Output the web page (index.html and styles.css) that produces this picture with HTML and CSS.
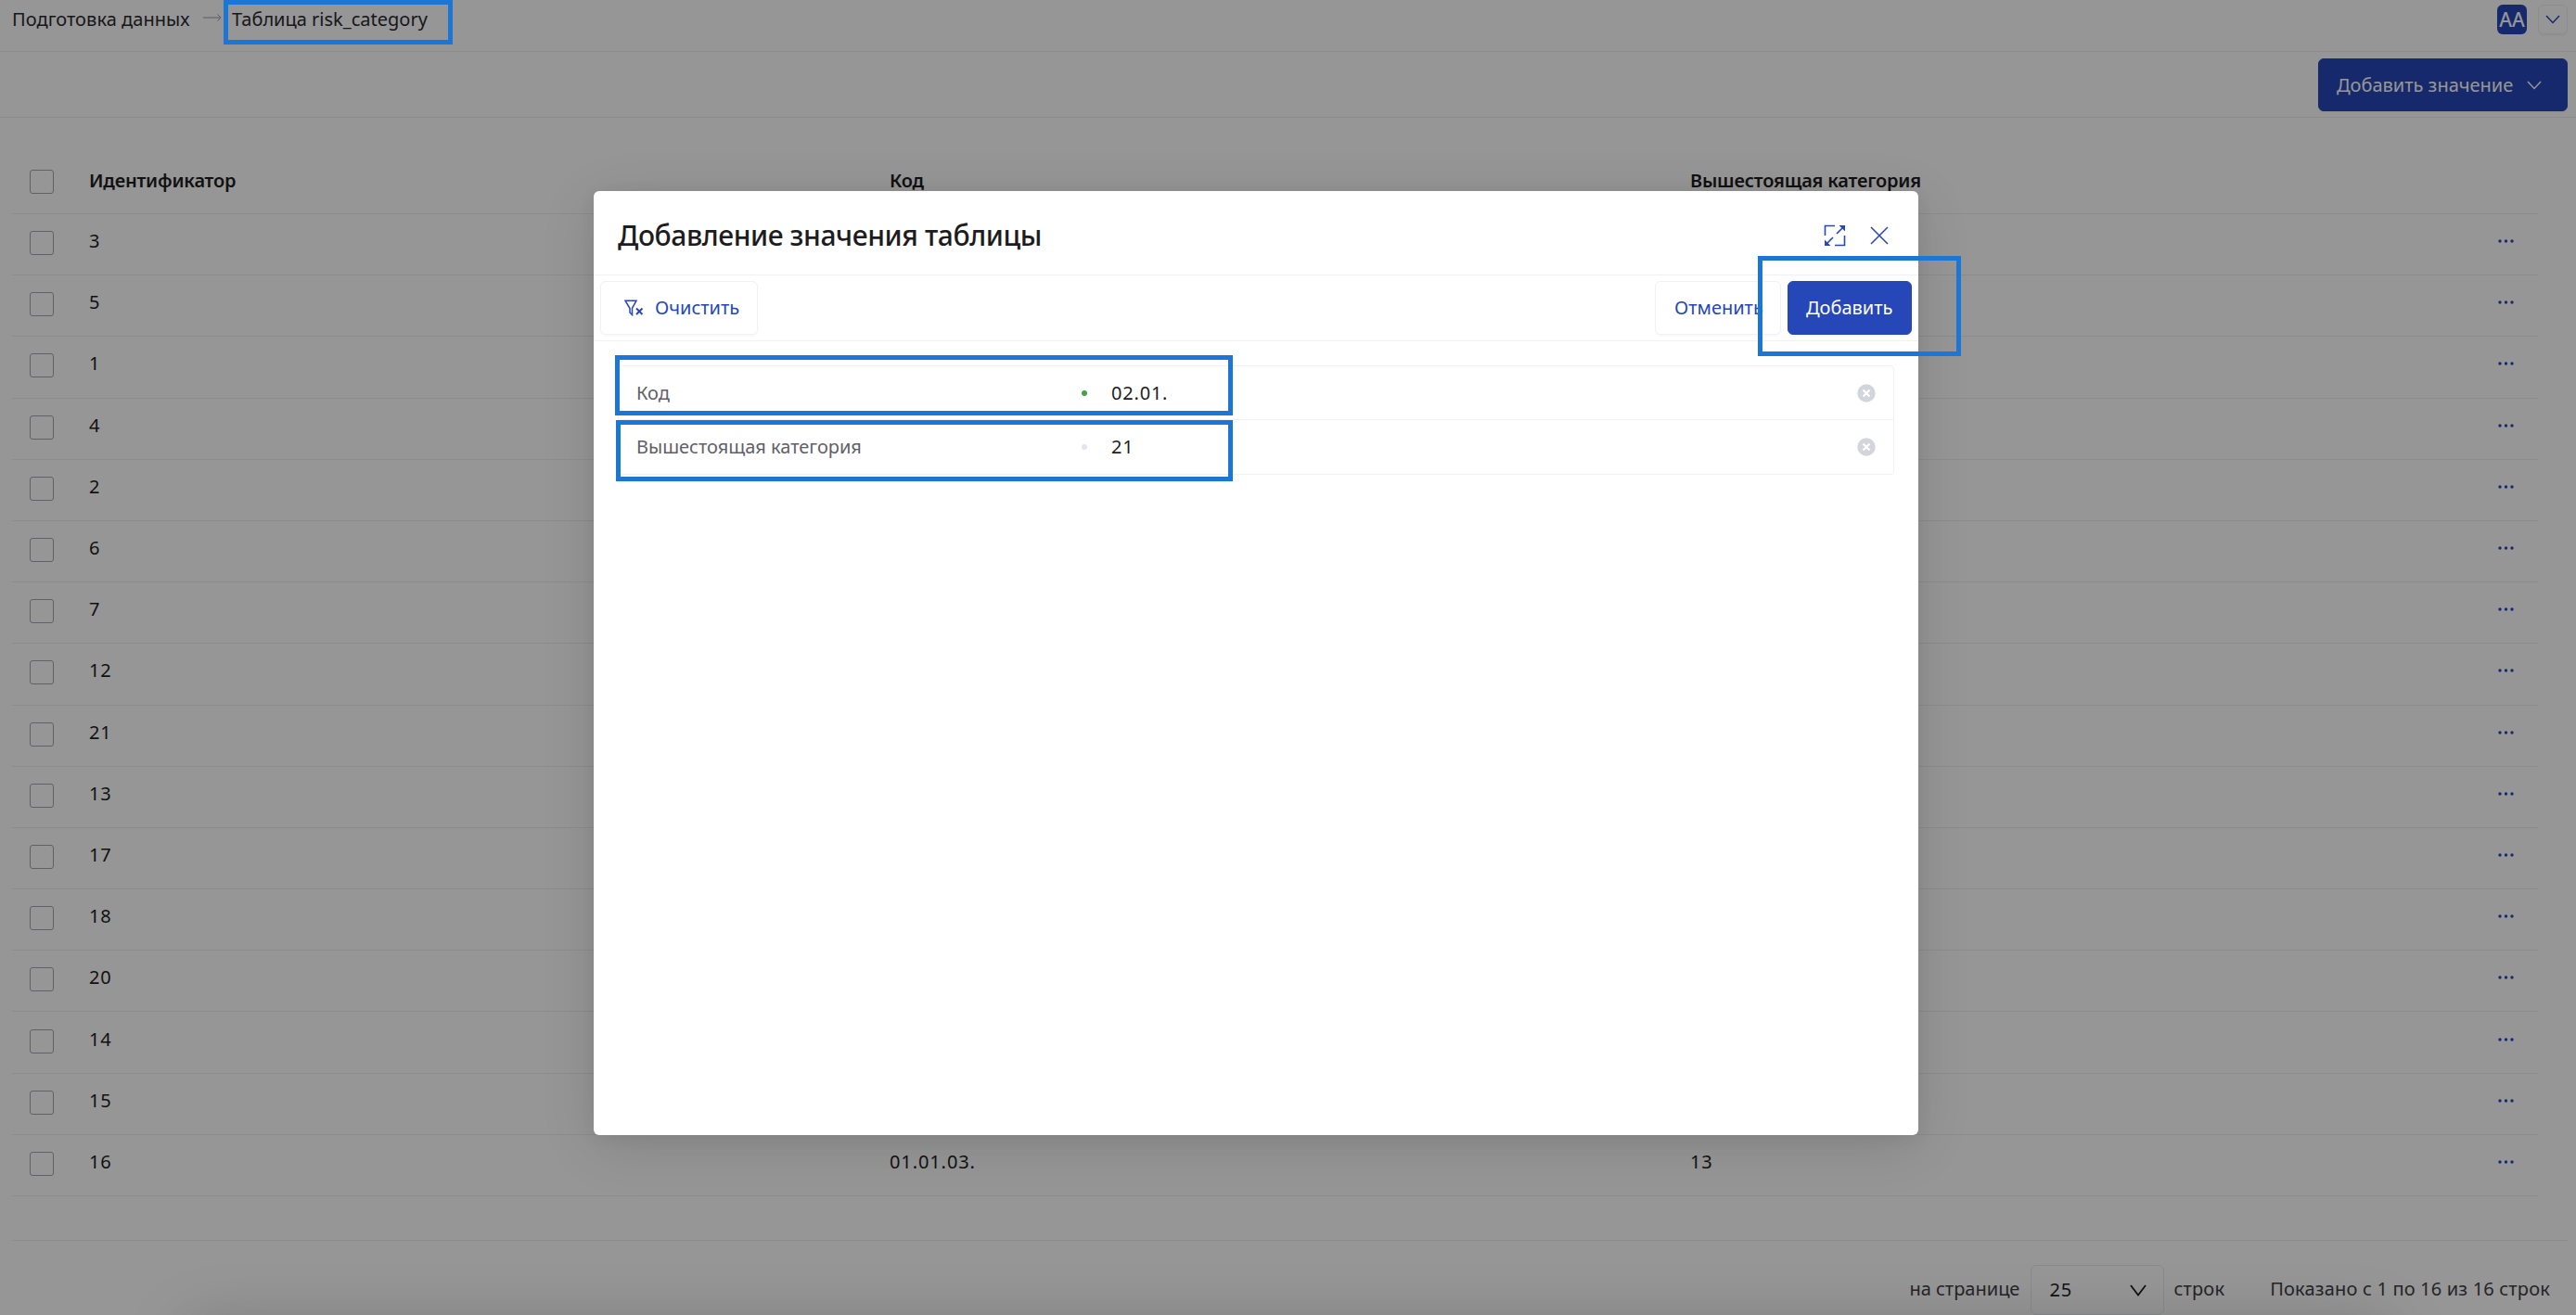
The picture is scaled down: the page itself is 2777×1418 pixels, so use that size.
FILE: index.html
```
<!DOCTYPE html>
<html lang="ru">
<head>
    <meta charset="UTF-8">
    <title>Таблица risk_category</title>
    <link rel="stylesheet" href="styles.css">
</head>
<body>
<div class="page">
    <header class="topbar">
        <nav class="crumbs">
            <span class="crumb-parent">Подготовка данных</span>
            <svg class="crumb-arrow" width="20" height="10" viewBox="0 0 20 10"><path d="M0 5h19M15.500 1.500L19 5l-3.500 3.500"/></svg>
            <span>Таблица risk_category</span>
        </nav>
        <div class="user">
            <span class="avatar">AA</span>
            <button class="user-menu"><svg class="chevron" width="16" height="10" viewBox="0 0 16 10"><path d="M1 1l7 7.500L15 1"/></svg></button>
        </div>
    </header>
    <div class="toolbar">
        <button class="btn btn-primary btn-add-value">
            <span>Добавить значение</span>
            <svg class="chevron" width="16" height="10" viewBox="0 0 16 10"><path d="M1 1l7 7.500L15 1"/></svg>
        </button>
    </div>
    <main class="content">
        <div id="grid">
            <div class="row row-head">
                <span class="check"></span>
                <span>Идентификатор</span>
                <span>Код</span>
                <span>Вышестоящая категория</span>
            </div>
        </div>
    </main>
    <footer class="pager">
        <span>на странице</span>
        <div class="select">
            <span>25</span>
            <svg class="chevron chevron-dark" width="18" height="13" viewBox="0 0 18 13"><path d="M1 1l8 10.500L17 1"/></svg>
        </div>
        <span class="pager-rows">строк</span>
        <span class="pager-total">Показано с 1 по 16 из 16 строк</span>
    </footer>
    <div class="bottom-shadow"></div>
</div>

<div class="overlay"></div>

<div class="modal">
    <div class="modal-head">
        <h1 class="modal-title">Добавление значения таблицы</h1>
        <svg class="icon-expand" width="24" height="24" viewBox="0 0 24 24">
            <path class="line" d="M12 1.500H1.500V12M12 22.500h10.500V12M14 10l6-6M10 14l-6 6"/>
            <path class="fill" d="M16.500 1H23v6.500zM1 16.500V23h6.500z"/>
        </svg>
        <svg class="icon-close" width="20" height="20" viewBox="0 0 20 20"><path d="M1 1l18 18M19 1L1 19"/></svg>
    </div>
    <div class="modal-tools">
        <button class="btn btn-clear">
            <svg class="icon-filter" width="21" height="18" viewBox="0 0 21 18">
                <path d="M1 1.200h12L8.500 9.500v7L6 14V9.500z"/>
                <path class="cross" d="M13 9.500l6.500 6.500M19.500 9.500L13 16"/>
            </svg>
            <span>Очистить</span>
        </button>
        <button class="btn btn-cancel">Отменить</button>
        <button class="btn btn-primary btn-add">Добавить</button>
    </div>
    <div class="form">
        <div class="field">
            <span class="label">Код</span>
            <i class="dot dot-required"></i>
            <span class="value">02.01.</span>
            <svg class="icon-clear" width="20" height="20" viewBox="0 0 20 20"><circle cx="10" cy="10" r="9.700"/><path d="M6.500 6.500l7 7M13.500 6.500l-7 7"/></svg>
        </div>
        <div class="field">
            <span class="label">Вышестоящая категория</span>
            <i class="dot"></i>
            <span class="value">21</span>
            <svg class="icon-clear" width="20" height="20" viewBox="0 0 20 20"><circle cx="10" cy="10" r="9.700"/><path d="M6.500 6.500l7 7M13.500 6.500l-7 7"/></svg>
        </div>
    </div>
</div>

<div class="mark mark-crumb"></div>
<div class="mark mark-code"></div>
<div class="mark mark-parent"></div>
<div class="mark mark-add"></div>

<script>
    // строки таблицы: id, код, вышестоящая категория
    var rows = [[3], [5], [1], [4], [2], [6], [7], [12], [21], [13], [17], [18], [20], [14], [15], [16, '01.01.03.', 13]];
    var dots = '<svg class="dots" width="17" height="4" viewBox="0 0 17 4"><circle cx="2" cy="2" r="1.700"/><circle cx="8.500" cy="2" r="1.700"/><circle cx="15" cy="2" r="1.700"/></svg>';
    document.getElementById('grid').insertAdjacentHTML('beforeend', rows.map(function (r) {
        return '<div class="row"><span class="check"></span><span>' + r[0] + '</span><span>' +
            (r[1] || '') + '</span><span>' + (r[2] || '') + '</span>' + dots + '</div>';
    }).join(''));
</script>
</body>
</html>
```
FILE: styles.css
```
* {
    box-sizing: border-box;
}

body {
    margin: 0;
    width: 2777px;
    height: 1418px;
    position: relative;
    overflow: hidden;
    background: #fff;
    color: #1d1d21;
    font: 20px/28px "Noto Sans", sans-serif;
    white-space: nowrap;
}

button {
    font: inherit;
    color: inherit;
    background: none;
    padding: 0;
    border: 0;
}

svg {
    display: block;
    flex: none;
    fill: none;
    stroke: #2547b8;
}

.page {
    position: relative;
    height: 1418px;
    display: flex;
    flex-direction: column;
    overflow: hidden;
}

.topbar {
    height: 56px;
    flex: none;
    border-bottom: 1px solid #eeeff3;
    display: flex;
    justify-content: space-between;
    align-items: flex-start;
    padding: 5px 9px 0 13px;
}

.crumbs {
    display: flex;
    align-items: center;
    height: 32px;
    color: #2a2a30;
}

.crumb-parent {
    width: 206px;
    letter-spacing: .05px;
}

.crumb-arrow {
    stroke: #9a9ca6;
    margin: 0 11px 4px 0;
}

.user {
    display: flex;
    gap: 12px;
}

.avatar {
    width: 32px;
    height: 32px;
    line-height: 32px;
    border-radius: 6px;
    background: #2547b8;
    color: #fff;
    text-align: center;
    font-size: 21px;
    font-weight: 500;
}

.user-menu {
    width: 32px;
    height: 32px;
    border: 1px solid #eeeff3;
    border-radius: 6px;
    display: flex;
    align-items: center;
    justify-content: center;
    box-shadow: 0 2px 1px rgba(0, 0, 0, .03);
}

.chevron {
    stroke-width: 1.500;
}

.chevron-dark {
    stroke: #1d1d21;
    stroke-width: 1.800;
}

.toolbar {
    height: 71px;
    flex: none;
    border-bottom: 1px solid #eeeff3;
    display: flex;
    justify-content: flex-end;
    padding: 7px 9px 0 0;
}

.btn {
    height: 58px;
    border: 1px solid #f0f1f5;
    border-radius: 6px;
    display: flex;
    align-items: center;
    box-shadow: 0 2px 2px rgba(0, 0, 0, .025);
    color: #2547b8;
}

.btn-primary {
    background: #2547b8;
    border-color: #2547b8;
    color: #fff;
}

.btn-add-value {
    width: 269px;
    height: 57px;
    justify-content: space-between;
    padding: 0 27px 0 19px;
}

.btn-add-value .chevron {
    stroke: #fff;
}

.content {
    padding: 39px 41px 0 13px;
    height: 1210px;
    flex: none;
}

.row {
    height: 66.1875px;
    border-bottom: 1px solid #eeeff3;
    display: grid;
    grid-template-columns: 83px 863px 863px 1fr 43px;
    padding-bottom: 7px;
    align-items: center;
    letter-spacing: .9px;
}

.row-head {
    height: 65px;
    font-weight: 600;
    letter-spacing: -.2px;
    padding-bottom: 6px;
}

.check {
    width: 26px;
    height: 26px;
    margin: 4px 0 0 19px;
    border: 1px solid #a3a5ae;
    border-radius: 3px;
}

.row-head .check {
    margin-top: 2px;
}

.dots {
    fill: #2547b8;
    stroke: none;
}

.pager {
    height: 81px;
    flex: none;
    margin: 0 9px 0 13px;
    border-top: 1px solid #eeeff3;
    display: flex;
    justify-content: flex-end;
    padding: 26px 19px 0 0;
    line-height: 52px;
    color: #3e3f45;
}

.select {
    width: 144px;
    height: 54px;
    border: 1px solid #e9eaef;
    border-radius: 6px;
    margin: 0 10px 0 12px;
    padding: 0 18px 0 19px;
    display: flex;
    align-items: center;
    justify-content: space-between;
    color: #1d1d21;
    letter-spacing: 1px;
}

.pager-rows {
    letter-spacing: .2px;
}

.pager-total {
    margin-left: 49px;
    letter-spacing: .18px;
}

.bottom-shadow {
    position: absolute;
    left: 200px;
    right: 200px;
    top: 1430px;
    height: 60px;
    border-radius: 12px;
    box-shadow: 0 0 70px rgba(0, 0, 0, .2);
}

.overlay {
    position: absolute;
    inset: 0;
    background: rgba(0, 0, 0, .41);
}

.modal {
    position: absolute;
    left: 640px;
    top: 206px;
    width: 1428px;
    height: 1018px;
    background: #fff;
    border-radius: 6px;
    box-shadow: 0 12px 60px rgba(0, 0, 0, .12), 0 3px 18px rgba(0, 0, 0, .06);
}

.modal-head {
    height: 91px;
    border-bottom: 1px solid #f0f1f5;
    display: flex;
    align-items: center;
    padding: 5px 32px 0 26px;
}

.modal-title {
    margin: 0 auto 0 0;
    font-size: 30px;
    line-height: 40px;
    font-weight: 500;
    letter-spacing: -.4px;
}

.icon-expand .line {
    stroke-width: 1.600;
}

.icon-expand .fill {
    fill: #2547b8;
    stroke: none;
}

.icon-close {
    margin-left: 26px;
    stroke-width: 1.500;
}

.modal-tools {
    height: 71px;
    border-bottom: 1px solid #f0f1f5;
    display: flex;
    padding: 6px 7px 0;
}

.btn-clear {
    width: 170px;
    padding-left: 25px;
    margin-right: auto;
}

.icon-filter {
    margin-right: 12px;
    stroke-width: 1.500;
}

.icon-filter .cross {
    stroke-width: 1.900;
}

.btn-cancel {
    width: 136px;
    padding-left: 20px;
    margin-right: 7px;
}

.btn-add {
    width: 134px;
    padding-left: 19px;
}

.form {
    margin: 26px 26px 0;
    border: 1px solid #f0f1f5;
    border-radius: 4px;
}

.field {
    height: 57px;
    display: grid;
    grid-template-columns: 499px 13px 1fr 20px;
    align-items: center;
    padding: 0 19px;
}

.field + .field {
    height: 59px;
    border-top: 1px solid #f0f1f5;
}

.label {
    color: #5f6068;
}

.dot {
    width: 6px;
    height: 6px;
    border-radius: 50%;
    margin-left: -19px;
    background: #e3e4ec;
}

.dot-required {
    background: #4ca044;
}

.value {
    letter-spacing: .8px;
}

.icon-clear circle {
    fill: #d3d5dc;
    stroke: none;
}

.icon-clear path {
    stroke: #fff;
    stroke-width: 2.200;
}

/* рамки-выделения поверх интерфейса */
.mark {
    position: absolute;
    border: 5px solid #1c76d5;
}

.mark-crumb {
    left: 241px;
    top: 0;
    width: 247px;
    height: 48px;
}

.mark-code {
    left: 663px;
    top: 383px;
    width: 666px;
    height: 65px;
}

.mark-parent {
    left: 664px;
    top: 453px;
    width: 665px;
    height: 66px;
}

.mark-add {
    left: 1895px;
    top: 276px;
    width: 219px;
    height: 108px;
}
```
